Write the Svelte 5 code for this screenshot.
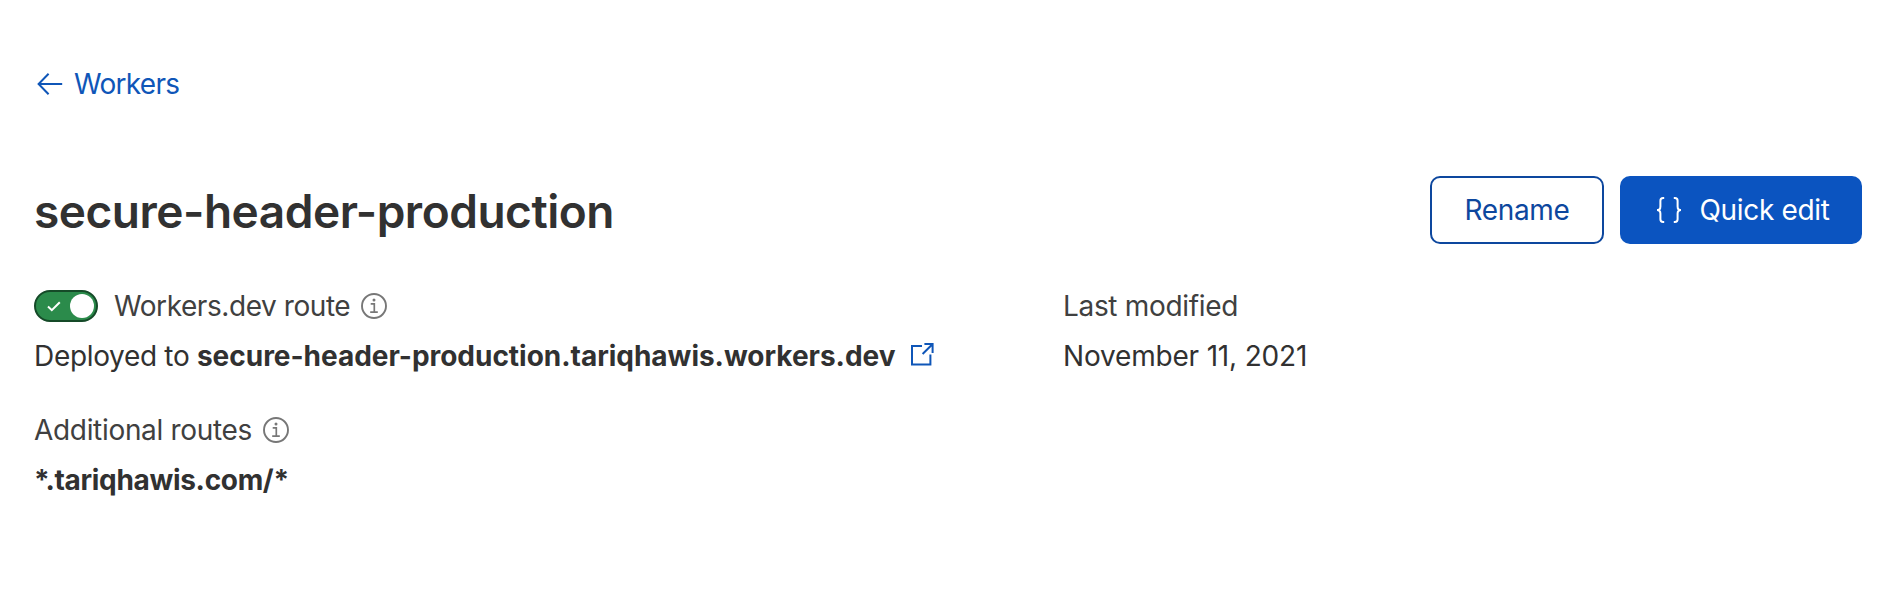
<script>
  const worker = 'secure-header-production';
  const host = 'secure-header-production.tariqhawis.workers.dev';
  const routes = ['*.tariqhawis.com/*'];
  let enabled = $state(true);
</script>

{#snippet info()}
  <svg class="info" viewBox="0 0 26 26" width="26" height="26" fill="none" stroke="#777" stroke-width="1.9">
    <circle cx="13" cy="13" r="12" />
    <path d="M9.7 10.8h3.6v8M9.2 19.1h7.6" stroke-width="1.7" />
    <circle cx="13" cy="7" r="1.5" fill="#777" stroke="none" />
  </svg>
{/snippet}

<main>
  <a class="back" href="#workers">
    <svg viewBox="0 0 26 22" width="26" height="22" fill="none" stroke="currentColor" stroke-width="2">
      <path d="M25.2 11H1.6M11.6 .8 1.6 11l10 10.2" />
    </svg>
    <span>Workers</span>
  </a>

  <header>
    <h1>{worker}</h1>
    <div class="actions">
      <button class="rename">Rename</button>
      <button class="edit">
        <svg viewBox="0 0 28 28" width="28" height="28" fill="none" stroke="currentColor" stroke-width="2">
          <path d="M9.2 2H8.1Q5.4 2 5.4 4.7V10.4Q5.4 14 2 14Q5.4 14 5.4 17.6V23.3Q5.4 26 8.1 26H9.2" />
          <path d="M18.8 2h1.1q2.7 0 2.7 2.7v5.7q0 3.6 3.4 3.6-3.4 0-3.4 3.6v5.7q0 2.7-2.7 2.7h-1.1" />
        </svg>
        <span>Quick edit</span>
      </button>
    </div>
  </header>

  <div class="details">
    <section>
      <div class="row">
        <button
          class="toggle"
          class:off={!enabled}
          role="switch"
          aria-checked={enabled}
          aria-label="Workers.dev route"
          onclick={() => (enabled = !enabled)}
        >
          <svg viewBox="0 0 14 11" width="14" height="11" fill="none" stroke="#fff" stroke-width="2">
            <path d="M1 5.6 4.8 9.2 12.8 1.2" />
          </svg>
          <i></i>
        </button>
        <span class="label route">Workers.dev route</span>
        {@render info()}
      </div>
      <div class="row">
        <span class="deployed">Deployed to <strong>{host}</strong></span>
        <svg class="external" viewBox="0 0 24 24" width="24" height="24" fill="none" stroke="#0f56b8" stroke-width="2">
          <path d="M12 4H2v18.6h18.4V12.4M14.4 2h8.2v9M22.4 2.2 12.6 12" />
        </svg>
      </div>
      <div class="row second">
        <span class="label">Additional routes</span>
        {@render info()}
      </div>
      {#each routes as route}
        <div class="row"><strong class="pattern">{route}</strong></div>
      {/each}
    </section>
    <section>
      <div class="row"><span class="label">Last modified</span></div>
      <div class="row"><span class="date">November 11, 2021</span></div>
    </section>
  </div>
</main>

<style>
  :global(body) {
    margin: 0;
    background: #fff;
  }
  main {
    box-sizing: border-box;
    height: 612px;
    padding: 64px 30px 0 34px;
    font: 400 28px/40px Inter, sans-serif;
    letter-spacing: -0.32px;
    color: #313131;
  }
  svg {
    display: block;
    flex: none;
  }
  .back {
    display: flex;
    align-items: center;
    gap: 11px;
    height: 40px;
    padding-left: 3px;
    color: #0f56b8;
    letter-spacing: -0.7px;
    text-decoration: none;
  }
  header {
    display: flex;
    align-items: center;
    justify-content: space-between;
    margin-top: 72px;
    height: 68px;
  }
  h1 {
    margin: 2px 0 0;
    font-size: 46px;
    font-weight: 600;
    line-height: 60px;
    letter-spacing: -0.48px;
  }
  strong {
    font-weight: 700;
    letter-spacing: -0.02px;
  }
  .pattern {
    letter-spacing: -0.32px;
  }
  .route {
    letter-spacing: -0.43px;
  }
  .date {
    letter-spacing: -0.18px;
  }
  .actions {
    display: flex;
    gap: 16px;
  }
  button {
    box-sizing: border-box;
    font: inherit;
    letter-spacing: -0.35px;
  }
  .rename,
  .edit {
    display: flex;
    align-items: center;
    justify-content: center;
    height: 68px;
    padding: 0;
    border-radius: 10px;
  }
  .rename {
    width: 174px;
    border: 2px solid #0d479e;
    background: #fff;
    color: #0d479e;
  }
  .edit {
    gap: 17px;
    width: 242px;
    padding-left: 2px;
    border: 0;
    background: #0b54c0;
    color: #fff;
  }
  .details {
    display: grid;
    grid-template-columns: 1029px 1fr;
    margin-top: 37px;
  }
  .row {
    display: flex;
    align-items: center;
    height: 50px;
    white-space: nowrap;
  }
  .second {
    margin-top: 24px;
  }
  .label {
    color: #404040;
  }
  .info {
    margin-left: 11px;
  }
  .external {
    margin: -4px 0 0 14px;
  }
  .toggle {
    display: flex;
    align-items: center;
    justify-content: space-between;
    width: 64px;
    height: 32px;
    margin-right: 16px;
    padding: 0 2px 0 11px;
    border: 2px solid #154a28;
    border-radius: 16px;
    background: #2b8b4b;
  }
  .toggle.off {
    flex-direction: row-reverse;
    background: #888;
  }
  .toggle i {
    width: 24px;
    height: 24px;
    border-radius: 50%;
    background: #fff;
  }
</style>
